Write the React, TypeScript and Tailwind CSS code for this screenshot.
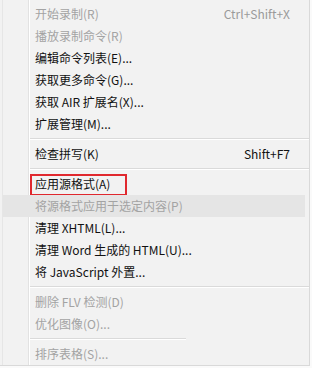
import React from "react";

type Item =
  | { kind: "item"; label: string; shortcut?: string; disabled?: boolean; hover?: boolean; marked?: boolean }
  | { kind: "sep"; short?: boolean };

const items: Item[] = [
  { kind: "item", label: "开始录制(R)", shortcut: "Ctrl+Shift+X", disabled: true },
  { kind: "item", label: "播放录制命令(R)", disabled: true },
  { kind: "item", label: "编辑命令列表(E)..." },
  { kind: "item", label: "获取更多命令(G)..." },
  { kind: "item", label: "获取 AIR 扩展名(X)..." },
  { kind: "item", label: "扩展管理(M)..." },
  { kind: "sep" },
  { kind: "item", label: "检查拼写(K)", shortcut: "Shift+F7" },
  { kind: "sep" },
  { kind: "item", label: "应用源格式(A)", marked: true },
  { kind: "item", label: "将源格式应用于选定内容(P)", disabled: true, hover: true },
  { kind: "item", label: "清理 XHTML(L)..." },
  { kind: "item", label: "清理 Word 生成的 HTML(U)..." },
  { kind: "item", label: "将 JavaScript 外置..." },
  { kind: "sep" },
  { kind: "item", label: "删除 FLV 检测(D)", disabled: true },
  { kind: "item", label: "优化图像(O)...", disabled: true },
  { kind: "sep", short: true },
  { kind: "item", label: "排序表格(S)...", disabled: true },
];

export default function App() {
  return (
    <div
      className="w-[312px] h-[368px] bg-[#fafafa] overflow-hidden"
      style={{ fontFamily: '"Noto Sans CJK SC", "Noto Sans", sans-serif' }}
    >
      <div className="relative w-[310px] h-[366px] bg-[#f2f2f2] border-r border-b border-[#d9d9d9] pt-[3px]">
        {/* gutter lines */}
        <div className="absolute left-[2px] top-0 h-full border-l border-[#e6e6e6]" />
        <div className="absolute left-[28px] top-0 h-full border-l border-[#e2e2e2]" />
        <div className="absolute left-[29px] top-0 h-full border-l border-white" />

        <ul className="relative flex flex-col">
          {items.map((it, idx) => {
            if (it.kind === "sep") {
              return (
                <li key={idx} className="h-[8px] flex flex-col justify-center pl-[30px]">
                  <div className={it.short ? "w-[156px] border-t border-[#dadada]" : "w-full border-t border-[#dadada]"} />
                  <div className={it.short ? "w-[156px] border-t border-white" : "w-full border-t border-white"} />
                </li>
              );
            }
            return (
              <li
                key={idx}
                className={[
                  "relative h-[22px] flex items-center text-[12px] leading-none",
                  it.disabled ? "text-[#a3a3a3]" : "text-[#111]",
                  it.hover
                    ? "bg-[#e5e5e5] ml-[3px] w-[302px] pl-[32px] pr-[16px]"
                    : "pl-[35px] pr-[19px]",
                ].join(" ")}
              >
                <span className="flex-1 whitespace-nowrap">{it.label}</span>
                {it.shortcut ? (
                  <span className={it.disabled ? "text-[#9a9a9a]" : "text-[#111]"}>{it.shortcut}</span>
                ) : null}
                {it.marked ? (
                  <span className="absolute left-[30px] top-[1px] w-[97px] h-[22px] border-2 border-[#e0282e]" />
                ) : null}
              </li>
            );
          })}
        </ul>
      </div>
    </div>
  );
}
